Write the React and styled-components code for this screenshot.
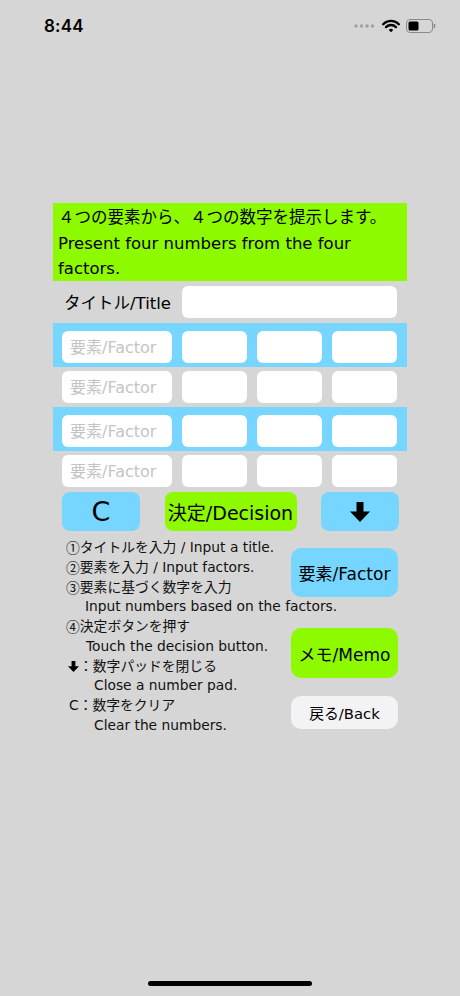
import styled, { createGlobalStyle } from 'styled-components';

const GlobalStyle = createGlobalStyle`
	html, body {
		margin: 0;
		padding: 0;
		background: #d6d6d6;
	}
	body {
		font-family: "DejaVu Sans", "Noto Sans CJK JP", sans-serif;
		color: #000;
	}
`;

const Screen = styled.div`
	width: 460px;
	height: 996px;
	display: flex;
	flex-direction: column;
	background: #d6d6d6;
	overflow: hidden;
`;

const StatusBar = styled.div`
	height: 50px;
	padding: 2px 24px 0 44px;
	box-sizing: border-box;
	display: flex;
	align-items: center;
	justify-content: space-between;
`;

const Time = styled.div`
	font-family: Inter, "Liberation Sans", sans-serif;
	font-weight: 600;
	font-size: 17px;
	letter-spacing: 0.2px;
`;

const StatusIcons = styled.div`
	display: flex;
	align-items: center;
	gap: 6px;
`;

const Main = styled.div`
	width: 354px;
	margin: 153px auto 0;
	display: flex;
	flex-direction: column;
`;

const Intro = styled.div`
	background: #8efa00;
	height: 78px;
	box-sizing: border-box;
	padding: 2px 5px 0;
	font-size: 16.5px;
	line-height: 25.5px;
`;

const IntroLine = styled.div``;

const TitleRow = styled.div`
	height: 42px;
	display: flex;
	align-items: center;
	padding: 0 10px 0 11px;
`;

const TitleLabel = styled.div`
	font-size: 16.5px;
	flex: 1;
`;

const Field = styled.input`
	width: ${(p) => p.$width}px;
	height: 32px;
	box-sizing: border-box;
	border: none;
	outline: none;
	border-radius: 6px;
	background: #fff;
	padding: 0 8px;
	font-family: inherit;
	font-size: 16px;
	color: #000;

	&::placeholder {
		color: #c4c4c6;
	}
`;

const FactorRow = styled.div`
	display: flex;
	gap: 10px;
	padding: ${(p) => (p.$band ? '8px 10px 4px 9px' : '4px 10px 4px 9px')};
	background: ${(p) => (p.$band ? '#76d6ff' : 'transparent')};
`;

const ButtonRow = styled.div`
	display: flex;
	justify-content: space-between;
	padding: 1px 8px 0 9px;
`;

const PadButton = styled.button`
	width: ${(p) => p.$width}px;
	height: 39px;
	border: none;
	border-radius: 8px;
	padding: 0;
	background: ${(p) => p.$bg};
	font-family: inherit;
	font-size: ${(p) => p.$size}px;
	color: #000;
	display: flex;
	align-items: center;
	justify-content: center;
`;

const BottomArea = styled.div`
	display: flex;
	padding: 7px 9px 0 13px;
`;

const Steps = styled.div`
	flex: 1;
	min-width: 0;
	font-size: 13.8px;
	line-height: 19.75px;
	white-space: nowrap;
	color: #111;
`;

const Step = styled.div`
	padding-left: ${(p) => p.$indent || 0}px;
	display: flex;
	align-items: center;
`;

const Num = styled.span`
	font-family: "Noto Sans CJK JP", sans-serif;
`;

const SideButtons = styled.div`
	width: 107px;
	display: flex;
	flex-direction: column;
`;

const SideButton = styled.button`
	height: ${(p) => p.$height}px;
	margin-top: ${(p) => p.$gap}px;
	border: none;
	border-radius: 10px;
	padding: 0;
	background: ${(p) => p.$bg};
	font-family: inherit;
	font-size: ${(p) => p.$size}px;
	color: #000;
`;

const HomeBar = styled.div`
	width: 164px;
	height: 5px;
	border-radius: 3px;
	background: #000;
	margin: auto auto 10px;
`;

const ArrowDown = ({ size }) => (
	<svg width={size} height={size} viewBox="0 0 20 20">
		<path d="M6.5 0h7v9.5h6.5L10 20 0 9.5h6.5z" fill="#000" />
	</svg>
);

const Wifi = () => (
	<svg width="18" height="14" viewBox="0 0 18 14">
		<path d="M1.2 5.2a11 11 0 0 1 15.6 0" stroke="#000" strokeWidth="2.3" fill="none" strokeLinecap="round" />
		<path d="M4 8.1a7 7 0 0 1 10 0" stroke="#000" strokeWidth="2.3" fill="none" strokeLinecap="round" />
		<path d="M6.8 11a3 3 0 0 1 4.4 0L9 13.3z" fill="#000" />
	</svg>
);

const Battery = () => (
	<svg width="30" height="14" viewBox="0 0 30 14">
		<rect x="0.5" y="0.5" width="26" height="13" rx="3.5" fill="none" stroke="#8a8a8a" />
		<rect x="2.5" y="2.5" width="10" height="9" rx="1.5" fill="#000" />
		<rect x="27.6" y="4.8" width="1.6" height="4.4" rx="0.8" fill="#8a8a8a" />
	</svg>
);

const Dots = () => (
	<svg width="22" height="6" viewBox="0 0 22 6">
		{[2, 7.5, 13, 18.5].map((x) => (
			<circle key={x} cx={x} cy="3" r="1.7" fill="#a0a0a0" />
		))}
	</svg>
);

const rows = [true, false, true, false];

const App = () => {
	return (
		<Screen>
			<GlobalStyle />
			<StatusBar>
				<Time>8:44</Time>
				<StatusIcons>
					<Dots />
					<Wifi />
					<Battery />
				</StatusIcons>
			</StatusBar>
			<Main>
				<Intro>
					<IntroLine>４つの要素から、４つの数字を提示します。</IntroLine>
					<IntroLine>Present four numbers from the four factors.</IntroLine>
				</Intro>
				<TitleRow>
					<TitleLabel>タイトル/Title</TitleLabel>
					<Field $width={215} />
				</TitleRow>
				{rows.map((band, i) => (
					<FactorRow key={i} $band={band}>
						<Field $width={110} placeholder="要素/Factor" />
						<Field $width={65} />
						<Field $width={65} />
						<Field $width={65} />
					</FactorRow>
				))}
				<ButtonRow>
					<PadButton $width={78} $bg="#76d6ff" $size={27}>
						C
					</PadButton>
					<PadButton $width={132} $bg="#8efa00" $size={19}>
						決定/Decision
					</PadButton>
					<PadButton $width={78} $bg="#76d6ff" $size={20}>
						<ArrowDown size={20} />
					</PadButton>
				</ButtonRow>
				<BottomArea>
					<Steps>
						<Step>
							<Num>①</Num>タイトルを入力 / Input a title.
						</Step>
						<Step>
							<Num>②</Num>要素を入力 / Input factors.
						</Step>
						<Step>
							<Num>③</Num>要素に基づく数字を入力
						</Step>
						<Step $indent={19}>Input numbers based on the factors.</Step>
						<Step>
							<Num>④</Num>決定ボタンを押す
						</Step>
						<Step $indent={20}>Touch the decision button.</Step>
						<Step $indent={2}>
							<ArrowDown size={11} />
							<span>：数字パッドを閉じる</span>
						</Step>
						<Step $indent={28}>Close a number pad.</Step>
						<Step $indent={3}>C：数字をクリア</Step>
						<Step $indent={28}>Clear the numbers.</Step>
					</Steps>
					<SideButtons>
						<SideButton $height={49} $gap={10} $bg="#76d6ff" $size={17}>
							要素/Factor
						</SideButton>
						<SideButton $height={50} $gap={31} $bg="#8efa00" $size={17}>
							メモ/Memo
						</SideButton>
						<SideButton $height={33} $gap={18} $bg="#f3f3f6" $size={14.8}>
							戻る/Back
						</SideButton>
					</SideButtons>
				</BottomArea>
			</Main>
			<HomeBar />
		</Screen>
	);
};

export default App;
